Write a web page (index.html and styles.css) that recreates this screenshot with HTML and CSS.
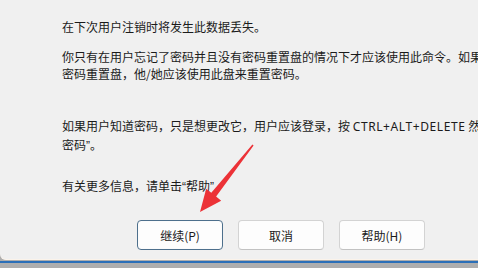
FILE: index.html
```html
<!DOCTYPE html>
<html lang="zh-CN">
<head>
  <meta charset="UTF-8">
  <meta name="viewport" content="width=device-width, initial-scale=1.0">
  <title>设置密码</title>
  <link rel="stylesheet" href="styles.css">
</head>
<body>

  <div class="dialog">
    <div class="message">
      <p class="para-1">在下次用户注销时将发生此数据丢失。</p>
      <p class="para-2">你只有在用户忘记了密码并且没有密码重置盘的情况下才应该使用此命令。如果用户已创建<br>密码重置盘，他/她应该使用此盘来重置密码。</p>
      <p class="para-3">如果用户知道密码，只是想更改它，用户应该登录，按 <span class="lat">CTRL+ALT+DELETE</span> 然后单击<span class="q">“</span>更改<br>密码<span class="q">”</span>。</p>
      <p class="para-4">有关更多信息，请单击<span class="q">“</span>帮助<span class="q">”</span></p>
    </div>

    <div class="buttons">
      <button class="btn btn-default">继续(P)</button>
      <button class="btn">取消</button>
      <button class="btn">帮助(H)</button>
    </div>
  </div>

  <div class="taskbar-edge"></div>

  <!-- red annotation arrow -->
  <svg class="arrow" width="70" height="80" viewBox="0 0 70 80">
    <polygon points="63.6,5.5 26.1,56.6 31.2,60.8 10,72 16.2,48.8 21.3,52.8 62.4,4.5" fill="#ec3237"/>
  </svg>

</body>
</html>
```

FILE: styles.css
```css
* {
  box-sizing: border-box;
  margin: 0;
  padding: 0;
}

html, body {
  width: 478px;
  height: 268px;
  overflow: hidden;
}

body {
  font-family: 'Noto Sans CJK SC', 'Liberation Sans', sans-serif;
  font-size: 12px;
  color: #1b1b1b;
  background: #aeaeae;
  position: relative;
}

.dialog {
  height: 260px;
  background: #f0f0f0;
  border-bottom-left-radius: 6px;
  border-bottom: 1px solid #fbf3ea;
  display: flex;
  flex-direction: column;
}

.message {
  padding-left: 62px;
  white-space: nowrap;
  line-height: 17px;
}

.q {
  font-family: 'Liberation Sans', sans-serif;
}

.lat {
  font-family: 'Noto Sans', sans-serif;
  letter-spacing: 0.6px;
}

.para-1 { margin-top: 18px; }
.para-2 { margin-top: 13px; }
.para-3 { margin-top: 35px; }
.para-4 { margin-top: 22px; }

.buttons {
  display: flex;
  gap: 15px;
  padding-left: 137px;
  margin-top: 24px;
}

.btn {
  width: 86px;
  height: 30px;
  font-family: inherit;
  font-size: 12px;
  color: #1b1b1b;
  background: #fdfdfd;
  border: 1px solid #d3d3d3;
  border-bottom-color: #c2c2c2;
  border-radius: 4px;
}

.btn-default {
  border: 1px solid #4d6f8c;
  box-shadow: inset 0 0 0 1px #fbfbfb;
}

.taskbar-edge {
  height: 2px;
  margin-top: 1px;
  background: #2b6fb8;
}

.arrow {
  position: absolute;
  left: 190px;
  top: 140px;
}
```
